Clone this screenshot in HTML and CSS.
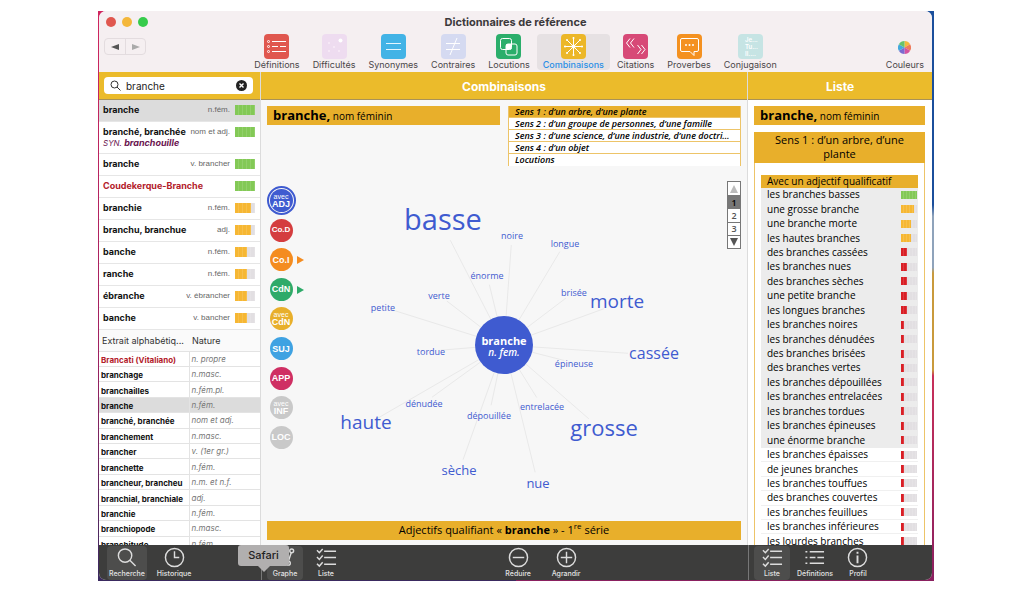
FILE: index.html
```html
<!DOCTYPE html>
<html lang="fr">
<head>
    <meta charset="UTF-8">
    <meta name="viewport" content="width=device-width, initial-scale=1.0">
    <title>Dictionnaires de référence</title>
    <link rel="stylesheet" href="styles.css">
</head>
<body>
    <div class="desktop">
    <div class="window">
        <header class="titlebar">
            <div class="controls">
                <div class="lights">
                    <span class="light red"></span>
                    <span class="light yellow"></span>
                    <span class="light green"></span>
                </div>
                <div class="history">
                    <button aria-label="Précédent"><svg width="8" height="8" viewBox="0 0 8 8"><path d="M8 1v6L0 4z" fill="#555"/></svg></button>
                    <button aria-label="Suivant"><svg width="8" height="8" viewBox="0 0 8 8"><path d="M0 1v6l8-3z" fill="#aaa"/></svg></button>
                </div>
            </div>
            <div class="center">
                <h1>Dictionnaires de référence</h1>
                <nav class="tools">
                    <button class="tool">
                        <svg class="tool-icon" viewBox="0 0 25 25"><rect width="25" height="25" rx="4" fill="#e0574f"/><g stroke="#fff" fill="none"><path d="M8 7.500h14M8 12.500h6M16 12.500h6M8 17.500h14"/><circle cx="4.500" cy="7.500" r="1"/><circle cx="4.500" cy="12.500" r="1"/><circle cx="4.500" cy="17.500" r="1"/></g></svg>
                        Définitions
                    </button>
                    <button class="tool">
                        <svg class="tool-icon" viewBox="0 0 25 25"><rect width="25" height="25" rx="4" fill="#eedcf0"/><g fill="#f8edf9"><circle cx="18.500" cy="6.500" r="2" fill="#fff"/><circle cx="7" cy="9" r="1"/><circle cx="12" cy="13" r="1"/><circle cx="7" cy="17" r="1"/><circle cx="17" cy="17" r="1"/></g></svg>
                        Difficultés
                    </button>
                    <button class="tool">
                        <svg class="tool-icon" viewBox="0 0 25 25"><rect width="25" height="25" rx="4" fill="#42b3e6"/><path d="M5 9.500h15M5 15.500h15" stroke="#e4f6ff"/></svg>
                        Synonymes
                    </button>
                    <button class="tool">
                        <svg class="tool-icon" viewBox="0 0 25 25"><rect width="25" height="25" rx="4" fill="#d5daf1"/><path d="M5 9.500h14M5 15.500h14M16 4L9 21" stroke="#fff"/></svg>
                        Contraires
                    </button>
                    <button class="tool">
                        <svg class="tool-icon" viewBox="0 0 25 25"><rect width="25" height="25" rx="4" fill="#2bae6b"/><g fill="none" stroke="#fff"><rect x="4.500" y="4.500" width="11" height="11" rx="2"/><rect x="10" y="10" width="11" height="11" rx="2"/></g><rect x="10" y="10" width="5.500" height="5.500" rx="1" fill="#fff"/></svg>
                        Locutions
                    </button>
                    <button class="tool active">
                        <svg class="tool-icon" viewBox="0 0 25 25"><rect width="25" height="25" rx="4" fill="#ecb728"/><path d="M12.500 3v19M3 12.500h19M6 6l13 13M19 6L6 19" stroke="#fff"/><g fill="#fff"><circle cx="12.500" cy="12.500" r="2"/><circle cx="12.500" cy="4" r="1"/><circle cx="12.500" cy="21" r="1"/><circle cx="4" cy="12.500" r="1"/><circle cx="21" cy="12.500" r="1"/><circle cx="6" cy="6" r="1"/><circle cx="19" cy="6" r="1"/><circle cx="6" cy="19" r="1"/><circle cx="19" cy="19" r="1"/></g></svg>
                        Combinaisons
                    </button>
                    <button class="tool">
                        <svg class="tool-icon" viewBox="0 0 25 25"><rect width="25" height="25" rx="4" fill="#d74977"/><path d="M7 4.500L3.500 9 7 13.500M11 4.500L7.500 9l3.500 4.500M14.500 11l3.500 4.500-3.500 4.500M18.500 11l3.500 4.500-3.500 4.500" fill="none" stroke="#fff"/></svg>
                        Citations
                    </button>
                    <button class="tool">
                        <svg class="tool-icon" viewBox="0 0 25 25"><rect width="25" height="25" rx="4" fill="#f49120"/><path d="M5 4.500h15a1.500 1.500 0 0 1 1.500 1.500v10a1.500 1.500 0 0 1-1.500 1.500h-3v4l-4-4H5A1.500 1.500 0 0 1 3.500 16V6A1.500 1.500 0 0 1 5 4.500z" fill="none" stroke="#fff"/><g fill="#fff"><circle cx="9" cy="11" r="1"/><circle cx="12.500" cy="11" r="1"/><circle cx="16" cy="11" r="1"/></g></svg>
                        Proverbes
                    </button>
                    <button class="tool">
                        <svg class="tool-icon" viewBox="0 0 25 25"><rect width="25" height="25" rx="4" fill="#c6e4e4"/><g fill="#fff" font-size="6" font-weight="600"><text x="7" y="8">Je...</text><text x="7" y="15">Tu...</text><text x="7" y="22">Il....</text></g></svg>
                        Conjugaison
                    </button>
                </nav>
            </div>
            <button class="tool colors">
                <svg width="13" height="13" viewBox="0 0 13 13"><path d="M6.500 6.500V0a6.500 6.500 0 0 1 5.600 3.200z" fill="#f3b93c"/><path d="M6.500 6.500l5.600-3.300a6.500 6.500 0 0 1 0 6.600z" fill="#ee7b5c"/><path d="M6.500 6.500l5.600 3.300A6.500 6.500 0 0 1 6.500 13z" fill="#d453a0"/><path d="M6.500 6.500V13A6.500 6.500 0 0 1 .9 9.800z" fill="#7c6bd0"/><path d="M6.500 6.500L.9 9.800a6.500 6.500 0 0 1 0-6.600z" fill="#44a9dc"/><path d="M6.500 6.500L.9 3.200A6.500 6.500 0 0 1 6.500 0z" fill="#67c36b"/></svg>
                Couleurs
            </button>
        </header>

        <div class="panes">
            <aside class="pane sidebar">
                <div class="band">
                    <label class="search">
                        <svg width="11" height="11" viewBox="0 0 11 11" fill="none" stroke="#333"><circle cx="4.500" cy="4.500" r="3.500"/><path d="M7 7l3.500 3.500"/></svg>
                        <input type="text" value="branche" aria-label="Recherche">
                        <button aria-label="Effacer"><svg width="11" height="11" viewBox="0 0 11 11"><circle cx="5.500" cy="5.500" r="5.500" fill="#222"/><path d="M3.500 3.500l4 4M7.500 3.500l-4 4" stroke="#fff" stroke-width="1.400"/></svg></button>
                    </label>
                </div>
                <ul class="results" id="results"></ul>
                <div class="extract">
                    <table>
                        <thead><tr><th>Extrait alphabétiq...</th><th>Nature</th></tr></thead>
                        <tbody id="extract"></tbody>
                    </table>
                </div>
            </aside>

            <main class="pane main">
                <h2 class="band">Combinaisons</h2>
                <div class="main-body">
                    <div class="main-top">
                        <div class="entry"><b>branche,</b> nom féminin</div>
                        <ul class="senses">
                            <li class="current">Sens 1 : d’un arbre, d’une plante</li>
                            <li>Sens 2 : d’un groupe de personnes, d’une famille</li>
                            <li>Sens 3 : d’une science, d’une industrie, d’une doctri…</li>
                            <li>Sens 4 : d’un objet</li>
                            <li>Locutions</li>
                        </ul>
                    </div>
                    <div class="stage">
                        <div class="kinds">
                            <button class="kind adj selected"><small>avec</small>ADJ</button>
                            <button class="kind cod">Co.D</button>
                            <button class="kind coi more">Co.I</button>
                            <button class="kind cdn more">CdN</button>
                            <button class="kind avec-cdn"><small>avec</small>CdN</button>
                            <button class="kind suj">SUJ</button>
                            <button class="kind app">APP</button>
                            <button class="kind off"><small>avec</small>INF</button>
                            <button class="kind off">LOC</button>
                        </div>
                        <svg class="graph" id="graph" viewBox="0 0 420 355"></svg>
                        <div class="pager">
                            <button aria-label="Page précédente"><svg width="8" height="8" viewBox="0 0 8 8"><path d="M4 0l4 8H0z" fill="#bbb"/></svg></button>
                            <button class="current">1</button>
                            <button>2</button>
                            <button>3</button>
                            <button aria-label="Page suivante"><svg width="8" height="8" viewBox="0 0 8 8"><path d="M4 8l4-8H0z" fill="#555"/></svg></button>
                        </div>
                    </div>
                    <div class="caption"><span>Adjectifs qualifiant « <b>branche</b> » - 1<sup>re</sup> série</span></div>
                </div>
            </main>

            <section class="pane list">
                <h2 class="band">Liste</h2>
                <div class="list-body">
                    <div class="entry"><b>branche,</b> nom féminin</div>
                    <div class="sense-box">
                        <h3>Sens 1 : d’un arbre, d’une plante</h3>
                        <table class="phrases">
                            <thead><tr><th colspan="2">Avec un adjectif qualificatif</th></tr></thead>
                            <tbody id="phrases"></tbody>
                        </table>
                    </div>
                </div>
            </section>
        </div>

        <footer class="dock">
            <div class="dock-group">
                <button class="dock-item active">
                    <svg viewBox="0 0 22 22"><circle cx="9.500" cy="9" r="7"/><path d="M14.500 14l6 6"/></svg>
                    Recherche
                </button>
                <button class="dock-item">
                    <svg viewBox="0 0 22 22"><circle cx="11" cy="11" r="9.500"/><path d="M11 4.500V11h5"/></svg>
                    Historique
                </button>
            </div>
            <div class="dock-group middle">
                <div class="tip">Safari</div>
                <button class="dock-item active">
                    <svg viewBox="0 0 22 22"><circle cx="17.500" cy="4" r="2"/><circle cx="14" cy="17" r="2"/><circle cx="5" cy="5" r="2"/><path d="M17 6l-3 9M6 7l7 9"/></svg>
                    Graphe
                </button>
                <button class="dock-item">
                    <svg viewBox="0 0 22 22"><path d="M1 3.500l2.500 2.500L7 2M1 10.500L3.500 13 7 9M1 17.500L3.500 20 7 16M8.500 4.500H21M8.500 11H21M8.500 18H21"/></svg>
                    Liste
                </button>
                <div class="zoom">
                    <button class="dock-item">
                        <svg viewBox="0 0 22 22"><circle cx="11" cy="11" r="9.500"/><path d="M5 11h12"/></svg>
                        Réduire
                    </button>
                    <button class="dock-item">
                        <svg viewBox="0 0 22 22"><circle cx="11" cy="11" r="9.500"/><path d="M5 11h12M11 5v12"/></svg>
                        Agrandir
                    </button>
                </div>
            </div>
            <div class="dock-group right">
                <button class="dock-item active">
                    <svg viewBox="0 0 22 22"><path d="M1 3.500l2.500 2.500L7 2M1 10.500L3.500 13 7 9M1 17.500L3.500 20 7 16M8.500 4.500H21M8.500 11H21M8.500 18H21"/></svg>
                    Liste
                </button>
                <button class="dock-item">
                    <svg viewBox="0 0 22 22"><path d="M6 5h15M6 11h6M14 11h7M6 17h15M1.500 5h2M1.500 11h2M1.500 17h2"/></svg>
                    Définitions
                </button>
                <button class="dock-item">
                    <svg viewBox="0 0 22 22"><circle cx="11" cy="11" r="9.500"/><path d="M11 9v8M11 5v2" stroke-width="2"/></svg>
                    Profil
                </button>
            </div>
        </footer>
    </div>
    </div>

    <script src="script.js"></script>
</body>
</html>
```
FILE: script.js
```js
// word, nature, score out of 5, synonym
const results = [
    ['branche', 'n.fém.', 5],
    ['branché, branchée', 'nom et adj.', 5, 'branchouille'],
    ['branche', 'v. brancher', 5],
    ['Coudekerque-Branche', '', 5],
    ['branchie', 'n.fém.', 4],
    ['branchu, branchue', 'adj.', 4],
    ['banche', 'n.fém.', 3],
    ['ranche', 'n.fém.', 3],
    ['ébranche', 'v. ébrancher', 3],
    ['banche', 'v. bancher', 3]
];

const extract = [
    ['Brancati (Vitaliano)', 'n. propre'],
    ['branchage', 'n.masc.'],
    ['branchailles', 'n.fém.pl.'],
    ['branche', 'n.fém.'],
    ['branché, branchée', 'nom et adj.'],
    ['branchement', 'n.masc.'],
    ['brancher', 'v. (1er gr.)'],
    ['branchette', 'n.fém.'],
    ['brancheur, brancheu', 'n.m. et n.f.'],
    ['branchial, branchiale', 'adj.'],
    ['branchie', 'n.fém.'],
    ['branchiopode', 'n.masc.'],
    ['branchitude', 'n.fém.']
];

const phrases = [
    ['les branches basses', 5],
    ['une grosse branche', 4],
    ['une branche morte', 3],
    ['les hautes branches', 3],
    ['des branches cassées', 2],
    ['les branches nues', 2],
    ['des branches sèches', 2],
    ['une petite branche', 2],
    ['les longues branches', 2],
    ['les branches noires', 1],
    ['les branches dénudées', 1],
    ['des branches brisées', 1],
    ['des branches vertes', 1],
    ['les branches dépouillées', 1],
    ['les branches entrelacées', 1],
    ['les branches tordues', 1],
    ['les branches épineuses', 1],
    ['une énorme branche', 1],
    ['les branches épaisses', 1],
    ['de jeunes branches', 1],
    ['les branches touffues', 1],
    ['des branches couvertes', 1],
    ['les branches feuillues', 1],
    ['les branches inférieures', 1],
    ['les lourdes branches', 1]
];

// word, x, baseline, size class
const nodes = [
    ['basse', 136, 64, 'xxl'],
    ['noire', 205, 73, 'xs'],
    ['longue', 258, 81, 'xs'],
    ['énorme', 180, 113, 'xs'],
    ['verte', 132, 133, 'xs'],
    ['petite', 76, 145, 'xs'],
    ['brisée', 267, 130, 'xs'],
    ['morte', 310, 142, 'l'],
    ['cassée', 347, 193, 'm'],
    ['épineuse', 267, 201, 'xs'],
    ['tordue', 124, 189, 'xs'],
    ['dénudée', 117, 241, 'xs'],
    ['dépouillée', 182, 253, 'xs'],
    ['entrelacée', 235, 244, 'xs'],
    ['haute', 59, 263, 'l'],
    ['grosse', 297, 270, 'xl'],
    ['sèche', 152, 309, 's'],
    ['nue', 231, 322, 's']
];

function meter(score) {
    const color = score === 5 ? 'high' : score > 2 ? 'mid' : 'low';
    return `<span class="meter"><span class="${color}" style="width:${score * 20}%"></span></span>`;
}

document.getElementById('results').innerHTML = results.map(([word, nature, score, syn], i) =>
    `<li class="${i === 0 ? 'current' : ''}">
        <div class="line"><b class="${word[0] === 'C' ? 'proper' : ''}">${word}</b><span>${nature}</span>${meter(score)}</div>
        ${syn ? `<div class="syn">SYN. <b>${syn}</b></div>` : ''}
    </li>`).join('');

document.getElementById('extract').innerHTML = extract.map(([word, nature], i) =>
    `<tr class="${i === 3 ? 'current' : ''}"><td class="${word[0] === 'B' ? 'proper' : ''}">${word}</td><td>${nature}</td></tr>`).join('');

document.getElementById('phrases').innerHTML = phrases.map(([text, score], i) =>
    `<tr class="${i < 18 ? 'shown' : ''}"><td>${text}</td><td>${meter(score)}</td></tr>`).join('');

// the lines stop short of the words
const cx = 197, cy = 179;
const halfHeight = { xs: 8, s: 10, m: 24, l: 12, xl: 18, xxl: 14 };
let lines = '';
let words = '';
nodes.forEach(([word, x, y, size]) => {
    const my = y - 4;
    const dist = Math.hypot(x - cx, my - cy);
    const t = (dist - halfHeight[size] - 2) / dist;
    lines += `<line x1="${cx}" y1="${cy}" x2="${cx + (x - cx) * t}" y2="${cy + (my - cy) * t}"/>`;
    words += `<text x="${x}" y="${y}" class="${size}">${word}</text>`;
});
document.getElementById('graph').innerHTML = lines + words +
    `<circle cx="${cx}" cy="${cy}" r="29"/>
     <text x="${cx}" y="${cy}" class="hub">branche</text>
     <text x="${cx}" y="${cy + 11}" class="hub-sub">n. fem.</text>`;
```
FILE: styles.css
```css
* {
    box-sizing: border-box;
}
body {
    margin: 0;
    height: 100vh;
    padding: 11px 98px;
    background: white;
    font-family: Inter, sans-serif;
    font-size: 9px;
    color: #111;
}
h1, h2, h3, ul {
    margin: 0;
    padding: 0;
    list-style: none;
}
button {
    border: 0;
    padding: 0;
    background: none;
    font: inherit;
    color: inherit;
}
table {
    border-collapse: collapse;
    width: 100%;
}
.desktop {
    height: 100%;
    padding: 0 2px 1px 1px;
    background:
        linear-gradient(#1b4f9c 34%, #8fa3bb 36% 45%, #c99a3c 46% 63%, #c8305a 64%, #8a2060) right / 50% 100% no-repeat,
        linear-gradient(#d0265f, #a02060 60%, #3a2a60);
}
.window {
    height: 100%;
    display: flex;
    flex-direction: column;
    border-radius: 7px;
    overflow: hidden;
    background: #f7f7f7;
}

/* title bar */
.titlebar {
    flex: none;
    height: 61px;
    display: grid;
    grid-template-columns: 1fr auto 1fr;
    background: #f5eff1;
    color: #4a4648;
}
.controls {
    padding: 6px 7px;
}
.lights {
    display: flex;
    gap: 6px;
}
.light {
    width: 10px;
    height: 10px;
    border-radius: 50%;
}
.red { background: #e0574f; }
.yellow { background: #f4b73b; }
.green { background: #36cb4b; }
.history {
    display: inline-flex;
    margin-top: 11px;
    margin-left: -2px;
    border: 1px solid #e3dcdf;
    border-radius: 4px;
}
.history button {
    width: 20px;
    height: 15px;
    display: grid;
    place-items: center;
}
.history button + button {
    border-left: 1px solid #e3dcdf;
}
.center {
    text-align: center;
}
h1 {
    font-size: 11px;
    line-height: 14px;
    padding: 4px 0 5px;
    color: #3c393b;
}
.tools {
    display: flex;
    gap: 1px;
}
.tool {
    display: flex;
    flex-direction: column;
    align-items: center;
    gap: 0;
    height: 36px;
    padding: 0 6px;
    border-radius: 4px;
    line-height: 11px;
}
.tool.active {
    background: #e6e1e3;
    color: #2a8fe6;
    font-weight: 500;
}
.tool-icon {
    width: 25px;
    height: 25px;
}
.colors {
    justify-self: end;
    justify-content: end;
    gap: 5px;
    padding: 0 8px;
    height: 59px;
}

/* three panes */
.panes {
    flex: 1;
    min-height: 0;
    display: grid;
    grid-template-columns: 162px minmax(0, 1fr) 184px;
}
.pane {
    min-height: 0;
    display: flex;
    flex-direction: column;
    border-right: 1px solid #dcdcdc;
}
.pane.list {
    border-right: 0;
    background: white;
}
.band {
    flex: none;
    height: 28px;
    padding: 5px 6px;
    background: #ebbb2b;
    border-bottom: 1px solid #a89258;
    color: white;
    font-size: 11px;
    line-height: 19px;
    text-align: center;
}
h2.band {
    font-size: 12px;
}
.search {
    display: flex;
    align-items: center;
    gap: 5px;
    height: 17px;
    padding: 0 6px;
    margin-right: 1px;
    margin-left: -1px;
    background: white;
    border-radius: 4px;
}
.search input {
    flex: 1;
    min-width: 0;
    padding: 0;
    border: 0;
    outline: 0;
    background: none;
    font: 10px Inter, sans-serif;
    color: #222;
}
.search button {
    display: flex;
}

/* sidebar */
.sidebar {
    background: white;
}
.results li {
    min-height: 22px;
    padding: 4px 5px 0 4px;
    border-bottom: 1px solid #e6e6e6;
}
.results .current, .extract .current {
    background: #dcdcdc;
}
.line {
    display: flex;
    align-items: center;
    gap: 5px;
    height: 12px;
    line-height: 12px;
    white-space: nowrap;
}
.line > b {
    margin-right: -2px;
}
.line > span:nth-child(2) {
    margin-left: auto;
    font-family: "Liberation Sans", sans-serif;
    font-size: 8px;
    color: #666;
}
.proper {
    color: #b3202a;
}
.syn {
    height: 15px;
    font-size: 8px;
    line-height: 10px;
    font-style: italic;
    color: #6a1450;
}
.syn b {
    font-size: 9px;
}
.meter {
    position: relative;
    display: block;
    flex: none;
    width: 20px;
    height: 10px;
    background: #e2dfe2;
}
.meter span {
    display: block;
    height: 100%;
}
.meter::after {
    content: "";
    position: absolute;
    inset: 0;
    background: repeating-linear-gradient(90deg, transparent 0 3px, rgba(255, 255, 255, .12) 3px 4px);
}
.high { background: #83c956; }
.mid { background: #f6b733; }
.low { background: #d91f26; }
.extract {
    flex: 1;
    min-height: 0;
    overflow: hidden;
    background: white;
}
.extract table {
    height: 221px;
    table-layout: fixed;
}
.extract th {
    height: 21px;
    padding: 0 3px;
    background: #fafafa;
    font-weight: 400;
    text-align: left;
    white-space: nowrap;
    color: #333;
}
.extract th:first-child {
    width: 90px;
}
.extract td {
    padding: 2px 2px 0;
    line-height: 10px;
    border-top: 1px solid #e3e3e3;
    font-size: 8px;
    font-weight: 700;
    white-space: nowrap;
    overflow: hidden;
}
.extract td + td {
    padding-top: 0;
    border-left: 1px solid #e3e3e3;
    font-weight: 400;
    font-style: italic;
    color: #777;
}

/* graph */
.main-body {
    flex: 1;
    min-height: 0;
    display: flex;
    flex-direction: column;
    padding: 6px 6px 5px;
    font-family: "Open Sans", sans-serif;
}
.main-top {
    display: grid;
    grid-template-columns: 1fr 1fr;
    gap: 8px;
    height: 60px;
}
.entry {
    height: 19px;
    padding: 0 6px;
    background: #e8af2b;
    font: 500 10px/18px "Open Sans", sans-serif;
    color: black;
}
.entry b {
    font-size: 13px;
}
.senses {
    height: 60px;
    overflow: hidden;
    border: 1px solid #edc468;
    border-width: 0 1px;
    background: white;
    font-size: 9px;
    font-weight: 600;
    font-style: italic;
    color: black;
}
.senses li {
    height: 12px;
    padding: 0 6px;
    line-height: 11px;
    white-space: nowrap;
    border-bottom: 1px solid #edc468;
}
.senses .current {
    background: #e8af2b;
}
.senses li:last-child {
    border-bottom: 0;
}
.stage {
    flex: 1;
    min-height: 0;
    display: grid;
    grid-template-columns: 40px 1fr 14px;
}
.kinds {
    display: grid;
    grid-template-rows: repeat(9, 1fr);
    height: 266px;
    width: 28px;
    margin-top: 20px;
    place-items: center;
}
.kind {
    position: relative;
    display: flex;
    flex-direction: column;
    justify-content: center;
    width: 23px;
    height: 23px;
    border-radius: 50%;
    color: white;
    font: bold 9px/8px "Liberation Sans", sans-serif;
    text-align: center;
}
.kind small {
    font-size: 7px;
    line-height: 6px;
    font-weight: 400;
}
.selected {
    outline: 2px solid #3f5bd0;
    outline-offset: 1px;
}
.adj { background: #3f5bd0; }
.cod { background: #d43d3f; font-size: 8px; }
.coi { background: #f48c20; }
.cdn { background: #2eaa69; }
.avec-cdn { background: #e8af2b; }
.suj { background: #3fa2e2; }
.app { background: #cf2f63; }
.off { background: #c9c9c9; }
.more::after {
    content: "";
    position: absolute;
    left: 27px;
    top: 8px;
    border: 4px solid transparent;
    border-left: 7px solid #f48c20;
    border-right: 0;
}
.cdn::after {
    border-left-color: #2eaa69;
}
.graph {
    width: 100%;
    height: 100%;
}
.graph line {
    stroke: #e9e9e9;
}
.graph text {
    fill: #3f5bd0;
    font-weight: 500;
    text-anchor: middle;
}
.graph circle {
    fill: #3f5bd0;
}
.xs { font-size: 9px; }
.s { font-size: 13px; }
.m { font-size: 16px; }
.l { font-size: 19px; }
.xl { font-size: 22px; }
.xxl { font-size: 29px; }
.graph .hub {
    fill: white;
    font-size: 11px;
    font-weight: 700;
}
.graph .hub-sub {
    fill: white;
    font-size: 10px;
    font-weight: 600;
    font-style: italic;
}
.pager {
    display: grid;
    grid-template-rows: repeat(5, 1fr);
    height: 68px;
    margin-top: 15px;
    border: 1px solid #777;
    background: white;
    font-size: 9px;
    font-weight: 600;
    line-height: 11px;
    color: #555;
}
.pager button {
    display: grid;
    place-items: center;
}
.pager button + button {
    border-top: 1px solid #777;
}
.pager .current {
    background: #777;
    color: black;
}
.caption {
    flex: none;
    height: 19px;
    background: #e8af2b;
    font-size: 11px;
    line-height: 17px;
    text-align: center;
    color: black;
}
.caption sup {
    font-size: 8px;
    line-height: 0;
}

/* list */
.list-body {
    flex: 1;
    min-height: 0;
    overflow: hidden;
    padding: 6px 7px 0 6px;
    font-family: "Open Sans", sans-serif;
    color: black;
}
.sense-box {
    margin-top: 7px;
    border: 1px solid #edc468;
    border-width: 0 1px;
    padding-bottom: 20px;
}
h3 {
    padding: 1px 12px 2px;
    margin: 0 -1px 12px;
    background: #e8af2b;
    font-size: 11px;
    line-height: 14px;
    font-weight: 500;
    text-align: center;
}
.phrases {
    width: calc(100% - 12px);
    height: 374px;
    margin: 0 6px;
    font-size: 10px;
    line-height: 13px;
    font-weight: 500;
}
.phrases th {
    height: 13px;
    padding: 0 6px;
    background: #e8af2b;
    font-weight: 500;
    text-align: left;
}
.phrases td {
    padding: 0 1px 0 6px;
    border-bottom: 1px solid #f0f0f0;
    white-space: nowrap;
}
.phrases .shown td {
    background: #ececec;
    border-color: #ececec;
}
.phrases .meter {
    width: 16px;
    height: 8px;
    margin-left: auto;
}
.phrases .meter::after {
    background: repeating-linear-gradient(90deg, transparent 0 2px, rgba(255, 255, 255, .12) 2px 3px);
}

/* bottom bar */
.dock {
    flex: none;
    height: 35px;
    display: grid;
    grid-template-columns: 162px minmax(0, 1fr) 184px;
    background: #3d3d3c;
    color: #e2e2e2;
    font-size: 7px;
    font-weight: 500;
}
.dock-group {
    position: relative;
    display: flex;
    align-items: end;
    gap: 8px;
    padding-left: 8px;
}
.dock-group + .dock-group {
    gap: 5px;
    padding-left: 5px;
    border-left: 1px solid #777;
}
.dock-item {
    display: flex;
    flex-direction: column;
    align-items: center;
    gap: 0;
    min-width: 36px;
    height: 34px;
    padding: 1px 2px 0;
    border-radius: 4px;
    line-height: 12px;
}
.dock-item.active {
    background: #4d4d4c;
}
.dock-item svg {
    width: 21px;
    height: 21px;
    fill: none;
    stroke: #dcdcdc;
    stroke-width: 1.5;
}
.zoom {
    display: flex;
    gap: 12px;
    position: absolute;
    left: 49%;
    bottom: 0;
}
.tip {
    position: absolute;
    left: -24px;
    top: 0;
    z-index: 1;
    width: 51px;
    height: 21px;
    border-radius: 3px;
    background: #b1afaf;
    color: #222;
    font-size: 11px;
    line-height: 21px;
    text-align: center;
}
.tip::after {
    content: "";
    position: absolute;
    left: 20px;
    top: 21px;
    border: 6px solid transparent;
    border-top-color: #b1afaf;
    border-bottom: 0;
}
```
